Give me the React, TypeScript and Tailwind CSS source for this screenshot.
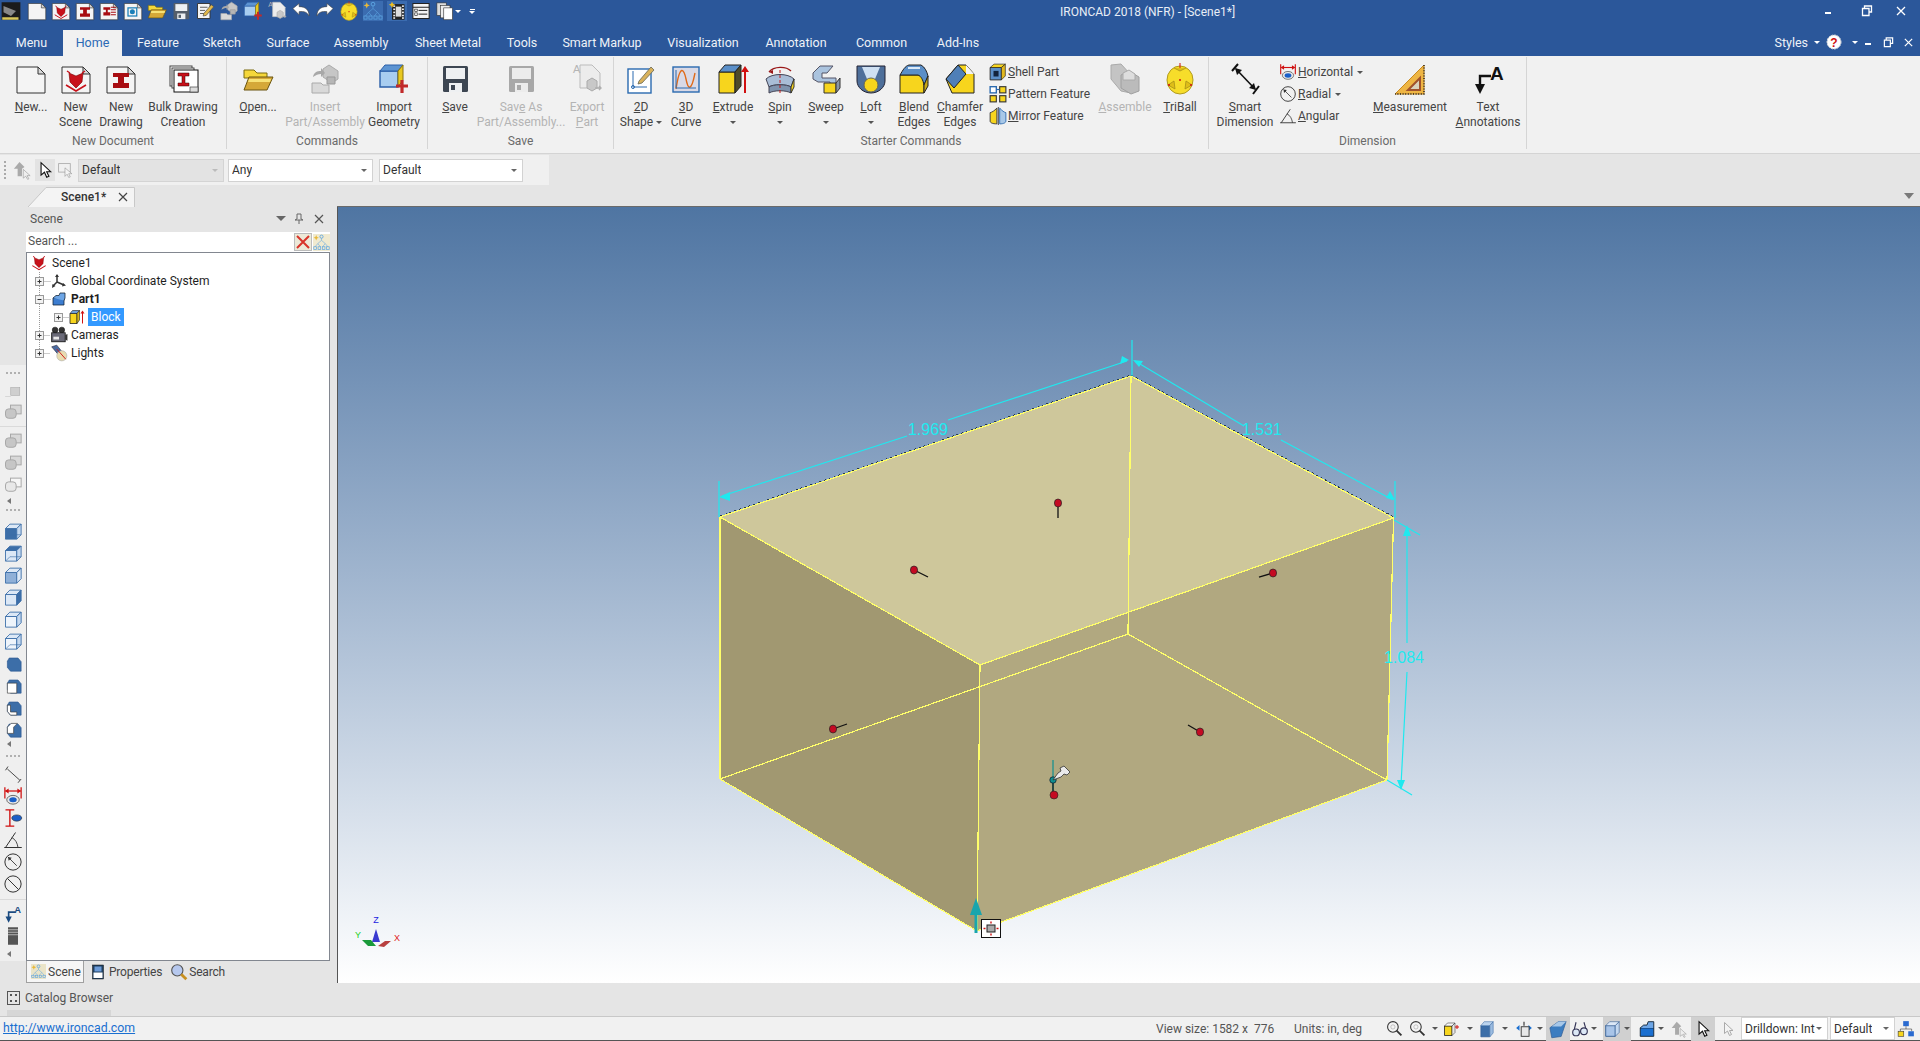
import React from "react";

type P = { s?: number; children?: React.ReactNode };
const I = ({ s = 32, children }: P) => (
  <svg width={s} height={s} viewBox="0 0 32 32" className="block shrink-0">
    {children}
  </svg>
);

const U = ({ c }: { c: string }) => <span className="underline">{c}</span>;
const Arrow = ({ color = "border-t-[#555]" }: { color?: string }) => (
  <span className={`inline-block w-0 h-0 border-x-[3px] border-t-[3px] border-x-transparent ${color}`} />
);

const Paper = ({ s = 32, children }: P) => (
  <I s={s}>
    <path d="M2 4h21l7 7v19H2z" fill="#f4f4f4" stroke="#333" strokeWidth="1" />
    <path d="M23 4v7h7z" fill="#d8d8d8" stroke="#333" strokeWidth="1" />
    {children}
  </I>
);
const Red3D = () => (
  <g>
    <path d="M9 10l7 3 7-3-1 9-6 6-6-6z" fill="#c8111a" stroke="#700" strokeWidth=".6" />
    <path d="M6 22l10 6 10-6" fill="none" stroke="#c8111a" strokeWidth="1.6" />
    <path d="M7 8l3 2M25 8l-3 2" stroke="#c8111a" strokeWidth="1.4" />
  </g>
);
const Beam = () => <path d="M8 10h16v4h-5v6h5v5H8v-5h5v-6H8z" fill="#a80d12" />;
const NewDoc = ({ s }: P) => <Paper s={s} />;
const NewScene = ({ s }: P) => <Paper s={s}><Red3D /></Paper>;
const NewDrawing = ({ s }: P) => <Paper s={s}><Beam /></Paper>;
const Bulk = ({ s }: P) => (
  <I s={s}>
    <rect x="3" y="3" width="22" height="20" fill="#fff" stroke="#444" />
    <rect x="5" y="5" width="22" height="20" fill="#fff" stroke="#444" />
    <rect x="7" y="7" width="24" height="22" fill="#fff" stroke="#111" />
    <path d="M11 10h11v3h-4v7h4v3H11v-3h4v-7h-4z" fill="#c8111a" stroke="#300" strokeWidth=".5" />
    <rect x="23" y="24" width="8" height="5" fill="#ddd" stroke="#444" strokeWidth=".7" />
  </I>
);
const Folder = ({ s }: P) => (
  <I s={s}>
    <path d="M2 7h10l3 3h10v5H2z" fill="#f5d73a" stroke="#7a6a10" />
    <path d="M2 27l5-13h24l-6 13z" fill="#d5a838" stroke="#6a5510" />
    <path d="M7 16h22l-1 3H6z" fill="#f7e276" />
  </I>
);
const Insert = ({ s }: P) => (
  <I s={s}>
    <path d="M14 6l6-4 9 6v8l-6 4-9-6z" fill="#c6c6c6" stroke="#aaa" />
    <path d="M18 14h8v7h-8z" fill="#b6b6b6" stroke="#999" />
    <path d="M3 20h9l2 2h6v8H3z" fill="#d9d9d9" stroke="#aaa" />
    <path d="M4 14c1-5 4-6 8-6V5l4 5-4 4v-3c-3 0-5 1-8 3z" fill="#a8a8a8" />
  </I>
);
const Import = ({ s }: P) => (
  <I s={s}>
    <path d="M2 8h18v16H2z" fill="#a8cdf0" stroke="#2a5ea8" strokeWidth="1.4" />
    <path d="M2 8l5-6h18l-5 6z" fill="#5d94d2" stroke="#2a5ea8" />
    <path d="M20 8l5-6v15l-5 7z" fill="#e8c820" stroke="#8a7410" />
    <path d="M18 23h12M24 17v13" stroke="#c12a2a" strokeWidth="3.2" />
  </I>
);
const Floppy = ({ s, c = "#3d4652", l = "#eef0f2" }: P & { c?: string; l?: string }) => (
  <I s={s}>
    <rect x="4" y="3" width="25" height="26" rx="1.5" fill={c} />
    <rect x="7" y="5" width="19" height="11" fill={l} />
    <rect x="10" y="20" width="13" height="9" fill={l} />
    <rect x="12" y="22" width="4" height="5" fill={c} />
  </I>
);
const ExportP = ({ s }: P) => (
  <I s={s}>
    <path d="M9 2h12l8 8v15H9z" fill="#ececec" stroke="#bbb" />
    <path d="M16 18l5-3 5 3v7l-5 3-5-3z" fill="#c8c8c8" stroke="#aaa" />
    <path d="M24 25h6M28 23l2 2-2 2" stroke="#b0b0b0" strokeWidth="1.4" fill="none" />
    <text x="2" y="10" fontSize="11" fill="#b5b5b5" fontFamily="Liberation Sans">A</text>
  </I>
);
const Shape2D = ({ s }: P) => (
  <I s={s}>
    <rect x="3" y="6" width="23" height="24" fill="#fff" stroke="#2a6ab0" strokeWidth="1.4" />
    <path d="M8 8v16h14" fill="none" stroke="#2a6ab0" />
    <circle cx="8" cy="24" r="1.5" fill="none" stroke="#2a6ab0" />
    <path d="M14 18L26 4l3 3-12 13-4 1z" fill="#d9b25c" stroke="#665" strokeWidth=".8" />
  </I>
);
const Curve3D = ({ s }: P) => (
  <I s={s}>
    <rect x="3" y="4" width="26" height="25" fill="#d9d9e6" stroke="#2a6ab0" strokeWidth="1.4" />
    <path d="M6 26C10 0 14 6 16 16s5 14 9-6" fill="none" stroke="#e06a1a" strokeWidth="1.4" />
    <path d="M6 7v18h20" fill="none" stroke="#2a6ab0" />
  </I>
);
const Extrude = ({ s }: P) => (
  <I s={s}>
    <path d="M2 9h16v21H2z" fill="#f7d51d" stroke="#222" />
    <path d="M2 9l6-7h16l-6 7z" fill="#5b8fc8" stroke="#222" />
    <path d="M18 9l6-7v21l-6 7z" fill="#4e4a2a" stroke="#222" />
    <path d="M28 30V8" stroke="#d01010" strokeWidth="2" />
    <path d="M24 9l4-6 4 6z" fill="#d01010" />
  </I>
);
const Spin = ({ s }: P) => (
  <I s={s}>
    <path d="M5 9C10 3 22 3 27 8" fill="none" stroke="#9a1818" strokeWidth="1.4" />
    <path d="M5 9l4-2v4z" fill="#9a1818" />
    <path d="M2 16c6-6 22-6 28 0l-3 8c-4-3-18-3-22 0z" fill="#a9bdd6" stroke="#445" />
    <path d="M5 24c4-3 18-3 22 0v6c-5-3-17-3-22 0z" fill="#7f93ad" stroke="#445" />
    <path d="M27 24l3-8v8l-3 6z" fill="#f7d51d" stroke="#333" />
    <path d="M16 7v24" stroke="#c01818" strokeDasharray="3 2" />
  </I>
);
const Sweep = ({ s }: P) => (
  <I s={s}>
    <path d="M3 10l7-7h13l-6 7h-5v5h14v10h-6v-6H8l-5-3z" fill="#aac3de" stroke="#556" />
    <path d="M14 20h12v10H14z" fill="#f7d51d" stroke="#333" />
    <path d="M26 20l4-5v10l-4 5z" fill="#8a96a6" stroke="#333" />
  </I>
);
const Loft = ({ s }: P) => (
  <I s={s}>
    <path d="M2 3h28v15c0 6-6 12-14 12S2 24 2 18z" fill="#4e6f9a" stroke="#223" />
    <path d="M7 4h18l-5 12H12z" fill="#cfe0f2" />
    <circle cx="16" cy="22" r="7" fill="#f7d51d" stroke="#665" />
  </I>
);
const Blend = ({ s }: P) => (
  <I s={s}>
    <path d="M2 12h24v18H2z" fill="#f7d51d" stroke="#222" />
    <path d="M2 12c3-5 5-9 9-10h12c4 2 6 7 7 11l-4 9c-1-5-3-9-6-10z" fill="#5b8fc8" stroke="#222" />
    <path d="M26 22l4-9v10l-4 7z" fill="#c8a818" stroke="#222" />
    <path d="M10 5h12" stroke="#dbe9f7" strokeWidth="2" />
  </I>
);
const Chamfer = ({ s }: P) => (
  <I s={s}>
    <path d="M2 16L14 2h8l8 9v19H8z" fill="#f7d51d" stroke="#222" />
    <path d="M2 16L14 2l8 9-12 14z" fill="#4f7fb8" stroke="#222" />
    <path d="M22 2l8 9H22z" fill="#f3f3f3" />
  </I>
);
const Shell = ({ s = 18 }: P) => (
  <I s={s}>
    <path d="M2 8h20v22H2z" fill="#5b8fc8" stroke="#222" strokeWidth="1.6" />
    <path d="M8 14h9v10H8z" fill="#12233c" />
    <path d="M2 8l7-6h20l-7 6z" fill="#f7d51d" stroke="#222" strokeWidth="1.2" />
    <path d="M22 8l7-6v21l-7 7z" fill="#e2b81e" stroke="#222" strokeWidth="1.2" />
  </I>
);
const Pattern = ({ s = 18 }: P) => (
  <I s={s}>
    <rect x="2" y="3" width="11" height="11" fill="#fff" stroke="#2a6ab0" strokeWidth="2.4" />
    <rect x="19" y="3" width="11" height="11" fill="#f7d51d" stroke="#333" strokeWidth="2" />
    <rect x="2" y="19" width="11" height="11" fill="#f7d51d" stroke="#333" strokeWidth="2" />
    <rect x="19" y="19" width="11" height="11" fill="#f7d51d" stroke="#333" strokeWidth="2" />
    <path d="M13 8h6" stroke="#2a6ab0" strokeWidth="2" />
  </I>
);
const Mirror = ({ s = 18 }: P) => (
  <I s={s}>
    <path d="M14 2v28c-8 0-12-2-12-5V10c4-1 7-3 12-8z" fill="#f7d51d" stroke="#333" strokeWidth="1.6" />
    <path d="M19 2c5 5 7 7 11 8v15c0 3-4 5-11 5z" fill="#a8c8e8" stroke="#2a6ab0" strokeWidth="1.6" />
    <path d="M16.5 0v32" stroke="#223" strokeWidth="1.5" />
  </I>
);
const Assemble = ({ s }: P) => (
  <I s={s}>
    <path d="M2 2l10-1 10 11v18L12 28 2 16z" fill="#c4c4c4" stroke="#aaa" />
    <path d="M12 12l8-4 10 6v14l-8 3-10-6z" fill="#bbb" stroke="#a0a0a0" />
    <path d="M14 10l6-3 6 4v6h-12z" fill="#ddd" stroke="#aaa" />
  </I>
);
const TriBall = ({ s }: P) => (
  <I s={s}>
    <ellipse cx="16" cy="17" rx="13" ry="14" fill="#f7dd2a" stroke="#b09a20" />
    <path d="M4 22l6-4 1 8zM28 22l-6-4-1 8zM10 5l6 3 6-3" fill="#dfbe18" stroke="#a89018" strokeWidth=".8" />
    <path d="M16 0v5" stroke="#d01010" />
    <circle cx="16" cy="17" r="1" fill="#d01010" />
    <circle cx="5" cy="22" r="1" fill="#d01010" />
    <circle cx="27" cy="22" r="1" fill="#d01010" />
  </I>
);
const SmartDim = ({ s }: P) => (
  <I s={s}>
    <path d="M3 8L9 1M24 31l6-8" stroke="#111" strokeWidth="2" />
    <path d="M7 6l19 20" stroke="#111" strokeWidth="1.6" />
    <path d="M6 5l7 2-5 5zM27 27l-7-2 5-5z" fill="#111" />
  </I>
);
const Horizontal = ({ s = 18 }: P) => (
  <I s={s}>
    <path d="M3 2v18M29 2v18" stroke="#d01010" strokeWidth="2" />
    <path d="M4 8h24" stroke="#d01010" strokeWidth="2" />
    <path d="M3 8l6-4v8zM29 8l-6-4v8z" fill="#d01010" />
    <ellipse cx="16" cy="22" rx="10" ry="7" fill="#e8e8e8" stroke="#222" />
    <ellipse cx="16" cy="22" rx="6" ry="4" fill="#1a5fc8" />
  </I>
);
const Radial = ({ s = 18 }: P) => (
  <I s={s}>
    <circle cx="16" cy="16" r="13" fill="none" stroke="#333" strokeWidth="1.6" />
    <path d="M8 8l14 14" stroke="#333" strokeWidth="1.4" />
    <path d="M8 8l6 1-5 5z" fill="#333" />
  </I>
);
const Angular = ({ s = 18 }: P) => (
  <I s={s}>
    <path d="M2 28h28M4 28L20 4" stroke="#333" strokeWidth="1.6" fill="none" />
    <path d="M14 12c6 3 9 9 10 16" stroke="#333" strokeWidth="1.4" fill="none" />
  </I>
);
const Measure = ({ s }: P) => (
  <I s={s}>
    <path d="M30 2v29H1z" fill="#eeb544" stroke="#c88a20" />
    <path d="M26 15v12H14z" fill="#d9d2bc" stroke="#a0522d" strokeWidth="2" />
    <path d="M30 2v29H1" fill="none" stroke="#222" strokeWidth="1.4" strokeDasharray="1 1.6" />
  </I>
);
const TextAnn = ({ s }: P) => (
  <I s={s}>
    <path d="M19 13H8v11" fill="none" stroke="#111" strokeWidth="2.4" />
    <path d="M3 21h10l-5 10z" fill="#111" />
    <text x="18" y="17" fontSize="19" fontWeight="700" fill="#111" fontFamily="Liberation Sans">A</text>
  </I>
);

const Logo = () => (
  <I s={20}>
    <rect x="1" y="2" width="30" height="28" fill="#1b1b1b" />
    <path d="M4 8l20 8-8 8-12-6z" fill="#888" />
    <path d="M2 26h26v4H2z" fill="#d8c65a" />
  </I>
);
const Note = ({ s }: P) => (
  <I s={s}>
    <path d="M4 4h20v24H4z" fill="#f4f4f4" stroke="#333" strokeWidth="1.5" />
    <path d="M8 10h12M8 15h8M8 20h8" stroke="#555" strokeWidth="1.5" />
    <path d="M14 20L26 6l4 3-12 14-5 1z" fill="#e2b84a" stroke="#444" />
  </I>
);
const Undo = ({ s, flip }: P & { flip?: boolean }) => (
  <I s={s}>
    <g transform={flip ? "translate(32 0) scale(-1 1)" : undefined}>
      <path d="M3 12l10-8v5c10 0 16 5 16 15-3-6-8-8-16-7v5z" fill="#fff" stroke="#444" strokeWidth="1" />
    </g>
  </I>
);
const TreeIc = ({ s = 20 }: P) => (
  <I s={s}>
    <circle cx="16" cy="5" r="3" fill="none" stroke="#5ba3e0" strokeWidth="1.6" />
    <path d="M16 8v4M16 12l-7 6M16 12l7 6M9 18l-5 6M9 18l5 6M23 18l-5 6M23 18l5 6" stroke="#5ba3e0" />
    {[4, 12, 20, 28].map((x) => <rect key={x} x={x - 2.5} y="24" width="5" height="5" fill="none" stroke="#5ba3e0" strokeWidth="1.3" />)}
    <path d="M6 2l1.5 3.5L11 7 7.5 8.5 6 12 4.5 8.5 1 7l3.5-1.5z" fill="#e8b838" />
  </I>
);
const Film = ({ s }: P) => (
  <I s={s}>
    <rect x="8" y="5" width="20" height="25" fill="#222" />
    {[7, 12, 17, 22, 26].map((y) => <g key={y}><rect x="10" y={y} width="3" height="2.5" fill="#eee" /><rect x="24" y={y} width="3" height="2.5" fill="#eee" /></g>)}
    <rect x="14" y="9" width="9" height="16" fill="#ddd" />
    <path d="M8 1l1.6 3.4L13 6 9.6 7.6 8 11 6.4 7.6 3 6l3.4-1.6z" fill="#f0c020" />
  </I>
);
const ListIc = ({ s }: P) => (
  <I s={s}>
    <rect x="3" y="4" width="26" height="24" fill="#f4f4f4" stroke="#222" strokeWidth="1.6" />
    <path d="M3 10h26M12 15h14M12 21h14" stroke="#222" strokeWidth="1.6" />
    <rect x="6" y="13" width="4" height="4" fill="none" stroke="#222" />
    <rect x="6" y="19" width="4" height="4" fill="none" stroke="#222" />
  </I>
);
const Copies = ({ s }: P) => (
  <I s={s}>
    <rect x="3" y="3" width="15" height="20" fill="#ddd" stroke="#333" />
    <rect x="9" y="7" width="15" height="20" fill="#eee" stroke="#333" />
    <rect x="14" y="11" width="14" height="19" fill="#fff" stroke="#333" />
  </I>
);
const BlueDoc = ({ s }: P) => (
  <Paper s={s}>
    <rect x="8" y="11" width="14" height="13" fill="none" stroke="#1a7fb8" strokeWidth="2" />
    <circle cx="15" cy="17" r="4" fill="#1a7fb8" />
  </Paper>
);
const ListRed = ({ s }: P) => (
  <Paper s={s}>
    <path d="M7 10h11v4h-4v4h4v5H7v-5h4v-4H7z" fill="#a80d12" />
    <path d="M19 10h8M19 14h8M19 18h8M19 22h8" stroke="#a80d12" strokeWidth="1.6" />
  </Paper>
);

const CursorIc = ({ s = 20, c = "#fff", st = "#111" }: P & { c?: string; st?: string }) => (
  <I s={s}>
    <path d="M9 3v22l6-5 4 9 4-2-4-8h7z" fill={c} stroke={st} strokeWidth="2" />
  </I>
);
const GrayHandCur = ({ s = 20 }: P) => (
  <I s={s}>
    <path d="M3 14L12 3l8 8-4 3v12H9V14z" fill="#aaa" />
    <path d="M18 15v14l4-3 3 5 2-1-3-5h5z" fill="#eee" stroke="#999" />
  </I>
);
const SelBox = ({ s = 20 }: P) => (
  <I s={s}>
    <rect x="3" y="3" width="22" height="16" fill="none" stroke="#aaa" strokeWidth="1.6" />
    <path d="M15 11v16l4-4 3 6 3-1-3-6h6z" fill="#f4f4f4" stroke="#888" />
  </I>
);

const Btn = ({ w, icon, l1, l2, dis, arrow, h = "h-[32px]" }: { w: string; icon: React.ReactNode; l1?: React.ReactNode; l2?: React.ReactNode; dis?: boolean; arrow?: boolean; h?: string }) => (
  <div className={`${w} flex flex-col items-center shrink-0 leading-[15px] whitespace-nowrap ${dis ? "text-[#b4b4b4]" : "text-[#444]"}`}>
    <div className={`${h} flex items-center justify-center`}>{icon}</div>
    <div className="mt-[5px] h-[15px] text-center">{l1}</div>
    <div className="h-[15px] text-center flex items-center justify-center">{l2}{arrow && <span className="ml-[3px] flex"><Arrow /></span>}</div>
  </div>
);

const Group = ({ w, pl, label, children, noBorder }: { w: string; pl: string; label: string; children: React.ReactNode; noBorder?: boolean }) => (
  <div className={`${w} shrink-0 h-[92px] mt-[1px] flex flex-col ${noBorder ? "" : "border-r border-[#d5d5d5]"}`}>
    <div className={`flex ${pl} pt-[6px] h-[78px]`}>{children}</div>
    <div className="text-center text-[#6a6a6a] leading-[15px]">{label}</div>
  </div>
);

const SmallRow = ({ icon, children, dis }: { icon: React.ReactNode; children: React.ReactNode; dis?: boolean }) => (
  <div className={`flex items-center h-[22px] ${dis ? "text-[#b4b4b4]" : "text-[#444]"}`}>
    {icon}
    <div className="ml-[1px] flex items-center whitespace-nowrap">{children}</div>
  </div>
);

const Drop = ({ w, text, dis }: { w: string; text: string; dis?: boolean }) => (
  <div className={`${w} h-[23px] shrink-0 flex items-center justify-between px-[3px] border ${dis ? "bg-[#e3e3e3] border-[#d4d4d4]" : "bg-white border-[#d2d2d2]"} text-[#333]`}>
    <span className="truncate">{text}</span>
    <span className="flex mr-[2px]"><Arrow color={dis ? "border-t-[#bbb]" : "border-t-[#666]"} /></span>
  </div>
);

const Grip = () => (
  <div className="h-[3px] flex gap-[2px] justify-center items-center">
    {[0, 1, 2, 3].map((i) => <span key={i} className="w-[2px] h-[2px] bg-[#b0b0b0]" />)}
  </div>
);
const LeftArrow = () => (
  <span className="block w-0 h-0 border-y-[3px] border-r-[4px] border-y-transparent border-r-[#777] ml-[7px]" />
);

const Sq = ({ s = 20, stroke = "#a8a8a8", fill = "#c6c6c6", top = "#d8d8d8" }: P & { stroke?: string; fill?: string; top?: string }) => (
  <I s={s}>
    <rect x="12" y="5" width="17" height="14" fill={top} stroke={stroke} strokeWidth="1.6" />
    <rect x="4" y="11" width="17" height="15" rx="5" fill={fill} stroke={stroke} strokeWidth="1.6" />
  </I>
);
const VCube = ({ f = "none", t = "none", r = "none", i = "none", solid }: { f?: string; t?: string; r?: string; i?: string; solid?: boolean }) => (
  <I s={20}>
    {i !== "none" && <path d="M12 6h17v16H12z" fill={i} />}
    <path d="M4 12h18v17H4z" fill={f === "none" ? "#dce8f6" : f} stroke="#3c6ea8" strokeWidth="1.4" />
    <path d="M4 12l7-7h18l-7 7z" fill={t === "none" ? "#dce8f6" : t} stroke="#3c6ea8" strokeWidth="1.4" />
    <path d="M22 12l7-7v17l-7 7z" fill={r === "none" ? "#c4d8ef" : r} stroke="#3c6ea8" strokeWidth="1.4" />
    {solid && <path d="M4 29l7-7h18" fill="none" stroke="#3c6ea8" />}
  </I>
);
const SCube = ({ w }: { w?: "tl" | "bl" | "l" | "t" }) => (
  <I s={20}>
    <path d="M10 8l14 0 5 6v15H12l-5-6V13z" fill="#3c6ea8" stroke="#2a5690" />
    {w === "l" && <path d="M7 13h15v16H7z" fill="#fff" stroke="#333" />}
    {w === "tl" && <path d="M7 13l6-6h10l-6 6v10H7z" fill="#fff" stroke="#333" />}
    {w === "bl" && <path d="M7 23l5 6h10v-5H12V13H7z" fill="#fff" stroke="#333" />}
  </I>
);
const Ln = ({ children }: { children: React.ReactNode }) => <div className="h-[22px] flex items-center justify-center">{children}</div>;

const Strip = () => (
  <div className="w-[26px] h-[596px] mt-[158px] bg-[#efefef] flex flex-col items-stretch">
    <div className="h-[8px] flex items-center justify-center mt-[4px]"><Grip /></div>
    <div className="h-[6px]" />
    <div className="h-[18px] flex items-center justify-center">
      <I s={18}><path d="M2 24h10" stroke="#c4c4c4" /><rect x="12" y="8" width="16" height="14" fill="#cfcfcf" stroke="#a8a8a8" /></I>
    </div>
    <Ln><Sq /></Ln>
    <div className="h-[7px] flex items-center"><div className="w-full h-px bg-[#dadada]" /></div>
    <Ln><Sq /></Ln><Ln><Sq /></Ln><Ln><Sq top="#f6f6f6" fill="#e8e8e8" /></Ln>
    <div className="h-[10px] flex items-center"><LeftArrow /></div>
    <div className="h-[8px] flex items-center justify-center"><Grip /></div>
    <div className="h-[6px]" />
    <Ln><VCube f="#3c6ea8" solid /></Ln>
    <Ln><VCube t="#3c6ea8" solid /></Ln>
    <Ln><VCube r="#dce8f6" f="#8fb0d8" i="#3c6ea8" /></Ln>
    <Ln><VCube r="#3c6ea8" /></Ln>
    <Ln><VCube i="#3c6ea8" f="#eef4fb" /></Ln>
    <Ln><VCube i="#dce8f6" t="#dce8f6" f="#eef4fb" solid /></Ln>
    <Ln><SCube /></Ln><Ln><SCube w="l" /></Ln><Ln><SCube w="bl" /></Ln><Ln><SCube w="tl" /></Ln>
    <div className="h-[8px] flex items-center"><LeftArrow /></div>
    <div className="h-[15px] flex items-center justify-center"><Grip /></div>
    <Ln><I s={20}><path d="M4 10l4-6M24 30l5-6M7 8l20 18" stroke="#333" strokeWidth="1.4" /></I></Ln>
    <Ln><Horizontal s={20} /></Ln>
    <Ln><I s={20}><path d="M4 3h14M4 29h14M11 3v26" stroke="#d01010" strokeWidth="2.2" /><ellipse cx="22" cy="16" rx="8" ry="5" fill="#1a5fc8" stroke="#333" /></I></Ln>
    <Ln><Angular s={20} /></Ln>
    <Ln><Radial s={20} /></Ln>
    <Ln><I s={20}><circle cx="16" cy="16" r="13" fill="none" stroke="#333" strokeWidth="1.6" /><path d="M7 7l18 18" stroke="#333" strokeWidth="1.6" /></I></Ln>
    <div className="h-[8px] flex items-center"><div className="w-full h-px bg-[#dadada]" /></div>
    <Ln><I s={20}><path d="M20 13H9v10" fill="none" stroke="#1a4a80" strokeWidth="2.6" /><path d="M4 20h10l-5 10z" fill="#1a4a80" /><text x="18" y="15" fontSize="15" fontWeight="700" fill="#1a4a80" fontFamily="Liberation Sans">A</text></I></Ln>
    <Ln><I s={20}><rect x="8" y="2" width="16" height="28" fill="#555" /><path d="M8 6h16M8 10h16M8 14h16" stroke="#eee" /></I></Ln>
    <div className="h-[14px] flex items-center"><LeftArrow /></div>
  </div>
);

const Gutter = ({ w, v = "full", box, boxX = 12 }: { w: number; v?: "full" | "half" | "none"; box?: "+" | "-"; boxX?: number }) => (
  <svg width={w} height={18} className="block shrink-0">
    {v !== "none" && <path d={`M12.5 0V${v === "full" ? 18 : 9}`} stroke="#999" strokeDasharray="1 1" />}
    <path d={`M${boxX}.5 9.5H${w}`} stroke="#999" strokeDasharray="1 1" />
    <rect x={boxX - 4 + 0.5} y={5.5} width={8} height={8} fill="#f2f2f2" stroke="#999" />
    <path d={`M${boxX - 2 + 0.5} 9.5h4`} stroke="#333" />
    {box === "+" && <path d={`M${boxX}.5 7.5v4`} stroke="#333" />}
  </svg>
);

const Axes = () => (
  <I s={16}>
    <path d="M12 4v14L4 26M12 18l14 6" fill="none" stroke="#333" strokeWidth="3" />
    <path d="M8 8l4-6 4 6zM24 20l6 5-8 2zM2 30l1-8 6 4z" fill="#333" />
  </I>
);
const Part3D = () => (
  <I s={16}>
    <path d="M4 14h22v14H4z" fill="#3c7dd0" stroke="#123" strokeWidth="1.5" />
    <path d="M4 14l6-5h6l2-5h10v10l-2 5" fill="#6ea6e6" stroke="#123" strokeWidth="1.5" />
  </I>
);
const Block = () => (
  <I s={16}>
    <path d="M2 9h14v20H2z" fill="#f7d51d" stroke="#222" strokeWidth="1.6" />
    <path d="M2 9l5-6h14l-5 6z" fill="#6fa0d8" stroke="#222" strokeWidth="1.2" />
    <path d="M16 9l5-6v19l-5 7z" fill="#d8b81a" stroke="#222" strokeWidth="1.2" />
    <path d="M27 29V8" stroke="#d01010" strokeWidth="2" />
    <path d="M23 9l4-6 4 6z" fill="#d01010" />
  </I>
);
const Cam = () => (
  <I s={18}>
    <circle cx="9" cy="7" r="5" fill="#333" stroke="#111" />
    <circle cx="21" cy="7" r="5" fill="#333" stroke="#111" />
    <rect x="3" y="12" width="24" height="16" fill="#6a6a78" stroke="#111" strokeWidth="1.5" />
    <rect x="6" y="19" width="10" height="5" fill="#e8e8e8" />
    <path d="M27 16l4-2v12l-4-2z" fill="#333" />
  </I>
);
const LightIc = () => (
  <I s={18}>
    <path d="M3 5l9-3 8 10-6 6z" fill="#4a6aa0" stroke="#223" />
    <circle cx="21" cy="21" r="9" fill="#e8dcb0" stroke="#aaa" />
    <path d="M12 9l16 18" stroke="#d01010" strokeWidth="1.6" />
  </I>
);

const Row = ({ children }: { children: React.ReactNode }) => <div className="h-[18px] flex items-center whitespace-nowrap text-[#1e1e1e]">{children}</div>;

const Tree = () => (
  <div className="flex-1 bg-white border border-[#828790] pt-[1px] text-[12px]">
    <Row>
      <div className="w-[4px]" />
      <svg width="16" height="16" viewBox="5 6 22 24" className="block shrink-0"><Red3D /></svg>
      <span className="ml-[5px]">Scene1</span>
    </Row>
    <Row><Gutter w={24} box="+" /><Axes /><span className="ml-[4px]">Global Coordinate System</span></Row>
    <Row><Gutter w={24} box="-" /><Part3D /><span className="ml-[4px] font-bold">Part1</span></Row>
    <Row><Gutter w={42} box="+" boxX={31} /><Block /><span className="ml-[3px] bg-[#3399ff] text-white h-[18px] leading-[18px] px-[3px]">Block</span></Row>
    <Row><Gutter w={23} box="+" /><Cam /><span className="ml-[3px]">Cameras</span></Row>
    <Row><Gutter w={23} v="half" box="+" /><LightIc /><span className="ml-[3px]">Lights</span></Row>
  </div>
);

const Pin = ({ x, y, ex, ey }: { x: number; y: number; ex: number; ey: number }) => (
  <g>
    <line x1={x} y1={y} x2={ex} y2={ey} stroke="#111" strokeWidth="1.3" />
    <ellipse cx={x} cy={y} rx="3.6" ry="4" fill="#c40a22" stroke="#222" strokeWidth=".7" />
  </g>
);

const Viewport = () => {
  const cy = "#1fe9ef";
  const yl = "#ffff6a";
  return (
    <div className="w-[1582px] h-[776px] bg-gradient-to-b from-[#4f75a2] to-[#ffffff]">
      <svg viewBox="338 207 1582 776" className="block w-full h-full">
        <g shapeRendering="crispEdges">
          <polygon points="720,517 1131,376 1393.5,518 980,665" fill="#cec79b" />
          <polygon points="720,517 980,665 977,931 720,779" fill="#a19871" />
          <polygon points="980,665 1393.5,518 1387,780 977,931" fill="#b1a880" />
          <path d="M720 516L1131 375L1394 517" fill="none" stroke="#2a3a4a" strokeWidth="1" strokeDasharray="2 3" />
          <g stroke={yl} strokeWidth="1.2" fill="none">
            <path d="M720 517L1131 376L1393.5 518L980 665Z" />
            <path d="M720 517L980 665" />
            <path d="M720 517V779L977 931L1387 780L1393.5 518" />
            <path d="M980 665L977 931" />
            <path d="M1128 634L1131 376M1128 634L720 779M1128 634L1387 780" />
          </g>
        </g>
        <g stroke={cy} strokeWidth="1.2" fill="none">
          <path d="M722 496L907 436M948 420L1127 361" />
          <path d="M1135 361L1244 426M1281 440L1393 500" />
          <path d="M719 481V517M1395 481V518M1132 340V376" />
          <path d="M1407 530V643M1407 672L1401 785" />
          <path d="M1394 520L1420 535M1387 780L1412 795" />
        </g>
        <g fill={cy}>
          <polygon points="719,497 730,492 730,501" />
          <polygon points="1129,360 1120,364 1122,356" />
          <polygon points="1133,360 1139,367 1143,361" />
          <polygon points="1395,500 1386,498 1390,491" />
          <polygon points="1407,525 1403,536 1411,536" />
          <polygon points="1401,790 1397,780 1405,780" />
        </g>
        <g fill={cy} fontFamily="Liberation Sans" fontSize="16">
          <text x="928" y="435" textAnchor="middle">1.969</text>
          <text x="1262" y="435" textAnchor="middle">1.531</text>
          <text x="1404" y="663" textAnchor="middle">1.084</text>
        </g>
        <Pin x={1058} y={503} ex={1058} ey={518} />
        <Pin x={914} y={570} ex={928} ey={577} />
        <Pin x={1273} y={573} ex={1259} ey={577} />
        <Pin x={833} y={729} ex={847} ey={724} />
        <Pin x={1200} y={732} ex={1188} ey={725} />
        <line x1="1053" y1="760" x2="1053" y2="795" stroke="#0f8f90" strokeWidth="1.2" />
        <line x1="1053" y1="780" x2="1053" y2="795" stroke="#111" strokeWidth="1.2" />
        <circle cx="1054" cy="795" r="4" fill="#c40a22" stroke="#222" strokeWidth=".6" />
        <circle cx="1053" cy="780" r="3.2" fill="#0f8f90" stroke="#123" strokeWidth=".8" />
        <path d="M1053 780l5-7 3-2-1-3 4-2 6 6-3 3-3-1-3 3z" fill="#eaeaea" stroke="#333" strokeWidth=".8" />
        <line x1="976" y1="933" x2="976" y2="910" stroke="#19a5ad" strokeWidth="3" />
        <polygon points="976,898 970,915 982,915" fill="#19a5ad" />
        <rect x="981.5" y="919.5" width="19" height="18" fill="#fff" stroke="#111" />
        <rect x="987" y="925" width="8" height="7" fill="#aaa" stroke="#222" />
        <path d="M991 921.5v2M991 933.5v2M983.5 928.5h2M996.5 928.5h2" stroke="#d01010" strokeWidth="1.4" />
        <g fontFamily="Liberation Sans" fontSize="9">
          <text x="376" y="923" fill="#2222e0" textAnchor="middle">Z</text>
          <text x="397" y="941" fill="#e02020" textAnchor="middle">X</text>
          <text x="358" y="938" fill="#22d022" textAnchor="middle">Y</text>
        </g>
        <polygon points="376,929 372,942 380,942" fill="#3a3ad0" />
        <polygon points="362,940 371,940 376,946 368,946" fill="#1a9a3a" />
        <polygon points="378,946 385,941 391,941 384,947" fill="#b84040" />
      </svg>
    </div>
  );
};

const Cell = ({ w, children, hi }: { w: string; children?: React.ReactNode; hi?: boolean }) => (
  <div className={`${w} h-[24px] shrink-0 flex items-center justify-center ${hi ? "bg-[#d0d0d0]" : ""}`}>{children}</div>
);
const Zoomer = ({ plus }: { plus?: boolean }) => (
  <I s={17}>
    <circle cx="13" cy="13" r="10" fill="#f4f4f4" stroke="#333" strokeWidth="2" />
    <path d="M20 20l9 9" stroke="#333" strokeWidth="3.4" />
    {plus ? <rect x="9" y="8" width="8" height="10" fill="none" stroke="#555" strokeWidth="1.4" /> : <circle cx="13" cy="13" r="4" fill="none" stroke="#999" />}
  </I>
);

const TABS: [string, string][] = [
  ["Feature", "w-[72px]"], ["Sketch", "w-[56px]"], ["Surface", "w-[76px]"], ["Assembly", "w-[70px]"], ["Sheet Metal", "w-[104px]"], ["Tools", "w-[44px]"], ["Smart Markup", "w-[116px]"], ["Visualization", "w-[86px]"], ["Annotation", "w-[100px]"], ["Common", "w-[71px]"], ["Add-Ins", "w-[82px]"],
];

export default function App() {
  return (
    <div className="w-[1920px] h-[1041px] overflow-hidden flex flex-col bg-[#e5e5e5] text-[12px] font-[Roboto,sans-serif]">
      {/* title bar */}
      <div className="h-[28px] bg-[#2b579a] flex items-center shrink-0">
        <div className="w-[1060px] flex items-center pl-[1px] -mt-[6px]">
          <div className="w-[20px] mr-[6px]"><Logo /></div>
          <div className="flex items-center gap-[4px]">
            <NewDoc s={20} /><NewScene s={20} /><NewDrawing s={20} /><ListRed s={20} /><BlueDoc s={20} /><Folder s={20} /><Floppy s={20} c="#555e6a" /><Note s={20} /><Insert s={20} /><Import s={20} /><ExportP s={20} /><Undo s={20} /><Undo s={20} flip /><TriBall s={20} />
            <div className="bg-[#3b6cb0]"><TreeIc /></div>
            <div className="bg-[#3b6cb0]"><Film s={20} /></div>
            <ListIc s={20} /><Copies s={20} />
          </div>
          <span className="flex"><Arrow color="border-t-white" /></span>
          <span className="ml-[8px] flex flex-col items-center gap-[1px]"><span className="w-[5px] h-px bg-white" /><Arrow color="border-t-white" /></span>
        </div>
        <div className="w-[174px] text-center text-[#e8eef6] whitespace-nowrap -mt-[4px]">IRONCAD 2018 (NFR) - [Scene1*]</div>
        <div className="flex-1 flex items-center justify-end text-white -mt-[6px]">
          <span className="w-[6px] h-[2px] bg-white mt-[4px]" />
          <svg width="12" height="12" viewBox="0 0 12 12" className="ml-[30px]"><path d="M3.5 3V1h7v6H8M1.5 3.5h6.5V10.500H1.500z" fill="none" stroke="#fff" strokeWidth="1.300" /></svg>
          <svg width="12" height="12" viewBox="0 0 12 12" className="ml-[22px] mr-[13px]"><path d="M2 2l8 8M10 2l-8 8" stroke="#fff" strokeWidth="1.300" /></svg>
        </div>
      </div>
      {/* tabs */}
      <div className="h-[28px] bg-[#2b579a] flex items-end shrink-0 text-white text-[12.5px]">
        <div className="w-[63px] h-[28px] pt-[2px] flex items-center justify-center text-[#eef2f8]">Menu</div>
        <div className="w-[59px] h-[26px] flex items-center justify-center bg-[#f1f1f1] text-[#2b6ab5]">Home</div>
        {TABS.map(([t, w]) => <div key={t} className={`${w} h-[28px] pt-[2px] flex items-center justify-center text-[#eef2f8]`}>{t}</div>)}
        <div className="flex-1 h-[28px] flex items-center justify-end">
          <span className="text-[#eef2f8] mr-[6px] pt-[2px]">Styles</span>
          <Arrow color="border-t-white" />
          <span className="mx-[5px]"><svg width="18" height="18" viewBox="0 0 18 18"><circle cx="9" cy="9" r="7" fill="#fff" stroke="#ddd" strokeDasharray="2 1" /><text x="9" y="13.500" textAnchor="middle" fontSize="12" fontWeight="700" fill="#d01010" fontFamily="Liberation Sans">?</text></svg></span>
          <span className="ml-[4px] flex"><Arrow color="border-t-white" /></span>
          <span className="w-[6px] h-[2px] bg-white ml-[7px] mt-[4px]" />
          <svg width="11" height="11" viewBox="0 0 12 12" className="ml-[12px]"><path d="M3.500 3V1h7v6H8M1.500 3.500h6.500V10.500H1.500z" fill="none" stroke="#fff" strokeWidth="1.300" /></svg>
          <svg width="11" height="11" viewBox="0 0 12 12" className="ml-[9px] mr-[6px]"><path d="M2 2l8 8M10 2l-8 8" stroke="#fff" strokeWidth="1.300" /></svg>
        </div>
      </div>
      {/* ribbon */}
      <div className="h-[98px] bg-[#f1f1f1] border-b border-[#d4d4d4] flex shrink-0">
        <Group w="w-[227px]" pl="pl-[8px]" label="New Document">
          <Btn w="w-[46px]" icon={<NewDoc />} l1={<><U c="N" />ew...</>} />
          <Btn w="w-[43px]" icon={<NewScene />} l1="New" l2="Scene" />
          <Btn w="w-[48px]" icon={<NewDrawing />} l1="New" l2="Drawing" />
          <Btn w="w-[76px]" icon={<Bulk />} l1="Bulk Drawing" l2="Creation" />
        </Group>
        <Group w="w-[201px]" pl="pl-[4px]" label="Commands">
          <Btn w="w-[54px]" icon={<Folder />} l1={<><U c="O" />pen...</>} />
          <Btn w="w-[80px]" dis icon={<Insert />} l1="Insert" l2="Part/Assembly" />
          <Btn w="w-[58px]" icon={<Import />} l1="Import" l2="Geometry" />
        </Group>
        <Group w="w-[186px]" pl="pl-[4px]" label="Save">
          <Btn w="w-[46px]" icon={<Floppy />} l1={<><U c="S" />ave</>} />
          <Btn w="w-[86px]" dis icon={<Floppy c="#a8a8a8" l="#ececec" />} l1={<>Sav<U c="e" /> As</>} l2="Part/Assembly..." />
          <Btn w="w-[46px]" dis icon={<ExportP />} l1="Export" l2={<><U c="P" />art</>} />
        </Group>
        <Group w="w-[595px]" pl="pl-[5px]" label="Starter Commands">
          <Btn w="w-[44px]" icon={<Shape2D />} l1={<><U c="2" />D</>} l2="Shape" arrow />
          <Btn w="w-[46px]" icon={<Curve3D />} l1={<><U c="3" />D</>} l2="Curve" />
          <Btn w="w-[48px]" icon={<Extrude />} l1={<><U c="E" />xtrude</>} l2={<Arrow />} />
          <Btn w="w-[46px]" icon={<Spin />} l1={<><U c="S" />pin</>} l2={<Arrow />} />
          <Btn w="w-[46px]" icon={<Sweep />} l1={<><U c="S" />weep</>} l2={<Arrow />} />
          <Btn w="w-[44px]" icon={<Loft />} l1={<><U c="L" />oft</>} l2={<Arrow />} />
          <Btn w="w-[42px]" icon={<Blend />} l1={<><U c="B" />lend</>} l2="Edges" />
          <Btn w="w-[50px]" icon={<Chamfer />} l1={<><U c="C" />hamfer</>} l2="Edges" />
          <div className="w-[110px] pl-[4px] -mt-[2px]">
            <SmallRow icon={<Shell />}><U c="S" />hell Part</SmallRow>
            <SmallRow icon={<Pattern />}>Pattern Feature</SmallRow>
            <SmallRow icon={<Mirror />}><U c="M" />irror Feature</SmallRow>
          </div>
          <Btn w="w-[60px]" dis icon={<Assemble />} l1={<><U c="A" />ssemble</>} />
          <Btn w="w-[50px]" icon={<TriBall />} l1={<><U c="T" />riBall</>} />
        </Group>
        <Group w="w-[318px]" pl="pl-[5px]" label="Dimension">
          <Btn w="w-[62px]" icon={<SmartDim />} l1={<><U c="S" />mart</>} l2="Dimension" />
          <div className="w-[94px] pl-[3px] -mt-[2px]">
            <SmallRow icon={<Horizontal />}><U c="H" />orizontal<span className="ml-[4px] flex"><Arrow /></span></SmallRow>
            <SmallRow icon={<Radial />}><U c="R" />adial<span className="ml-[4px] flex"><Arrow /></span></SmallRow>
            <SmallRow icon={<Angular />}><U c="A" />ngular</SmallRow>
          </div>
          <Btn w="w-[80px]" icon={<Measure />} l1={<><U c="M" />easurement</>} />
          <Btn w="w-[76px]" icon={<TextAnn />} l1="Text" l2={<><U c="A" />nnotations</>} />
        </Group>
      </div>
      {/* toolbar */}
      <div className="h-[32px] shrink-0 flex items-start pt-[1px]">
        <div className="w-[549px] h-[30px] bg-[#f0f0f0] flex items-center">
          <div className="ml-[4px] w-[2px] h-[18px] border-l-2 border-dotted border-[#aaa]" />
          <div className="ml-[5px] w-[22px] flex justify-center"><GrayHandCur /></div>
          <div className="ml-[2px] w-[20px] h-[22px] bg-[#e3e3e3] flex items-center justify-center"><CursorIc s={18} /></div>
          <div className="ml-[1px] w-[18px] flex justify-center"><SelBox s={17} /></div>
          <div className="ml-[4px]"><Drop w="w-[146px]" text="Default" dis /></div>
          <div className="ml-[4px]"><Drop w="w-[145px]" text="Any" /></div>
          <div className="ml-[6px]"><Drop w="w-[144px]" text="Default" /></div>
        </div>
      </div>
      {/* doc tabs */}
      <div className="h-[21px] shrink-0 flex">
        <div className="w-[337px] pl-[28px] flex items-end">
          <div className="relative w-[107px] h-[20px] flex items-center pl-[33px] pr-[4px] justify-between text-[#333] font-medium">
            <svg width="107" height="20" viewBox="0 0 107 20" className="absolute inset-0 block">
              <path d="M0 20L18 .5H106.500V20" fill="#f4f4f4" stroke="#c8c8c8" />
            </svg>
            <span className="relative">Scene1*</span>
            <svg width="10" height="10" viewBox="0 0 10 10" className="relative mr-[3px]"><path d="M1 1l8 8M9 1L1 9" stroke="#444" strokeWidth="1.200" /></svg>
          </div>
        </div>
        <div className="flex-1 border-b border-[#6a6a6a] flex justify-end items-center pr-[6px]">
          <span className="inline-block w-0 h-0 border-x-[5px] border-t-[6px] border-x-transparent border-t-[#7a7a7a]" />
        </div>
      </div>
      {/* main */}
      <div className="h-[776px] shrink-0 flex">
        <div className="w-[337px] flex">
          <Strip />
          <div className="w-[304px] flex flex-col">
            <div className="h-[25px] flex items-center px-[4px] pb-[2px] text-[#555] justify-between">
              <span>Scene</span>
              <div className="flex items-center mr-[2px] text-[#555]">
                <span className="inline-block w-0 h-0 border-x-[5px] border-t-[5px] border-x-transparent border-t-[#666]" />
                <svg width="10" height="12" viewBox="0 0 10 12" className="ml-[8px]"><path d="M3 1h4v5l2 1H1l2-1zM5 7v4" fill="none" stroke="#666" /></svg>
                <svg width="10" height="10" viewBox="0 0 10 10" className="ml-[10px]"><path d="M1 1l8 8M9 1L1 9" stroke="#555" strokeWidth="1.200" /></svg>
              </div>
            </div>
            <div className="h-[20px] bg-white flex items-center justify-between pl-[2px]">
              <span className="text-[#555] pb-[2px]">Search ...</span>
              <div className="flex items-center">
                <div className="w-[18px] h-[18px] bg-[#ece9d8] border border-[#bbb] flex items-center justify-center">
                  <svg width="14" height="14" viewBox="0 0 14 14"><path d="M1 1l12 12M13 1L1 13" stroke="#d8342a" strokeWidth="2" /></svg>
                </div>
                <div className="bg-[#f0ead0] ml-[1px]"><TreeIc s={17} /></div>
              </div>
            </div>
            <Tree />
            <div className="h-[22px] flex items-stretch text-[#444]">
              <div className="w-[58px] bg-[#f6f6f6] border border-t-0 border-[#a0a0a0] flex items-center pl-[4px] gap-[2px]">
                <div className="bg-[#eae4c8]"><TreeIc s={15} /></div><span>Scene</span>
              </div>
              <div className="flex items-center ml-[6px]">
                <I s={16}><rect x="5" y="2" width="22" height="28" fill="#1f3f5f" stroke="#111" /><rect x="9" y="5" width="14" height="10" fill="#6a9ad8" /><rect x="7" y="17" width="18" height="11" fill="#fff" /></I>
                <span className="ml-[3px] tracking-[-0.2px]">Properties</span>
              </div>
              <div className="flex items-center ml-[8px]">
                <I s={18}><circle cx="13" cy="13" r="10" fill="#b6c8ee" stroke="#555" strokeWidth="2" /><path d="M20 20l9 9" stroke="#c89020" strokeWidth="5" /></I>
                <span className="ml-[1px] tracking-[-0.2px]">Search</span>
              </div>
            </div>
          </div>
          <div className="w-[7px]" />
        </div>
        <div className="w-px bg-[#555]" />
        <Viewport />
      </div>
      {/* catalog */}
      <div className="h-[33px] shrink-0 flex flex-col pl-[7px]">
        <div className="h-[27px] flex items-center text-[#555] pt-[2px]">
          <svg width="14" height="14" viewBox="0 0 14 14" className="mr-[4px]"><rect x=".5" y=".5" width="12" height="13" fill="none" stroke="#555" /><rect x="3" y="3" width="2" height="2" fill="#555" /><rect x="8" y="3" width="2" height="2" fill="#555" /><rect x="3" y="9" width="2" height="2" fill="#555" /><rect x="8" y="9" width="2" height="2" fill="#555" /></svg>
          <span>Catalog Browser</span>
        </div>
        <div className="w-[104px] h-[6px] bg-[#d6d6d6]" />
      </div>
      {/* status */}
      <div className="h-[25px] shrink-0 bg-[#f1f1f1] border-t border-[#c8c8c8] border-b border-b-[#555] flex items-center">
        <div className="w-[1156px] pl-[3px]"><span className="text-[#1a6fd0] underline text-[12.3px]">http://www.ironcad.com</span></div>
        <div className="w-[138px] text-[#555] whitespace-pre">View size: 1582 x  776</div>
        <div className="w-[88px] text-[#555]">Units: in, deg</div>
        <Cell w="w-[24px]"><Zoomer /></Cell>
        <Cell w="w-[23px]"><Zoomer /></Cell>
        <Cell w="w-[12px]"><Arrow /></Cell>
        <Cell w="w-[20px]"><I s={16}><path d="M3 10h15v19H3z" fill="#f7d51d" stroke="#222" strokeWidth="1.600" /><path d="M3 10l6-6h15l-6 6z" fill="#f7f7f7" stroke="#222" /><path d="M18 10l6-6v19l-6 6z" fill="#e8e8e8" stroke="#222" /><path d="M24 12h8M28 8v8" stroke="#d01010" strokeWidth="2" /></I></Cell>
        <Cell w="w-[17px]"><Arrow /></Cell>
        <Cell w="w-[18px]"><I s={18}><path d="M5 10h16v20H5z" fill="#3c6ea8" stroke="#2a5690" /><path d="M5 10l6-7h16l-6 7z" fill="#bcd4ee" stroke="#3c6ea8" /><path d="M21 10l6-7v20l-6 7z" fill="#9cbce0" stroke="#3c6ea8" /></I></Cell>
        <Cell w="w-[18px]"><Arrow /></Cell>
        <Cell w="w-[20px]"><I s={18}><path d="M2 14l6-5v10zM30 14l-6-5v10z" fill="#1a6fd0" /><rect x="11" y="12" width="14" height="17" fill="#e8e8e8" stroke="#333" strokeWidth="1.600" /><path d="M16 3v7" stroke="#333" strokeWidth="2" /></I></Cell>
        <Cell w="w-[12px]"><Arrow /></Cell>
        <Cell w="w-[24px]" hi><I s={20}><path d="M3 14l14-10 12 0-8 24-15 2z" fill="#3c7dc0" stroke="#2a5690" /><path d="M17 4h12l-8 8H6z" fill="#a8c8e8" /></I></Cell>
        <Cell w="w-[20px]"><I s={18}><circle cx="9" cy="22" r="6" fill="#dce8f6" stroke="#335" strokeWidth="2" /><circle cx="23" cy="20" r="6" fill="#dce8f6" stroke="#335" strokeWidth="2" /><path d="M6 16l3-12M26 14L23 4" stroke="#335" strokeWidth="2" /></I></Cell>
        <Cell w="w-[8px]"><Arrow /></Cell>
        <div className="w-[5px]" />
        <Cell w="w-[28px]" hi><I s={18}><path d="M3 10h17v19H3z" fill="#a8c4e8" stroke="#2a5690" strokeWidth="1.500" /><path d="M3 10l7-7h17l-7 7z" fill="#dce8f6" stroke="#2a5690" /><path d="M20 10l7-7v19l-7 7z" fill="#c4d8ef" stroke="#2a5690" /></I><span className="ml-[2px] flex"><Arrow /></span></Cell>
        <div className="w-[6px]" />
        <Cell w="w-[20px]"><I s={18}><path d="M4 14h24v15H4z" fill="#1a6fd0" stroke="#123" strokeWidth="1.600" /><path d="M4 14l6-5h6l2-6h10v11" fill="#6ea6e6" stroke="#123" strokeWidth="1.600" /></I></Cell>
        <Cell w="w-[8px]"><Arrow /></Cell>
        <div className="w-[4px]" />
        <Cell w="w-[20px]"><GrayHandCur s={18} /></Cell>
        <div className="w-[2px]" />
        <Cell w="w-[24px]" hi><CursorIc s={18} /></Cell>
        <div className="w-[3px]" />
        <Cell w="w-[20px]"><CursorIc s={16} c="#f4f4f4" st="#aaa" /></Cell>
        <div className="w-[3px]" />
        <Drop w="w-[87px]" text="Drilldown: Int" />
        <div className="w-[2px]" />
        <Drop w="w-[65px]" text="Default" />
        <div className="ml-[2px]"><I s={18}><rect x="11" y="2" width="10" height="9" fill="#2a6ad0" /><path d="M16 11v5M6 16h20M6 16v4M26 16v4" stroke="#333" /><rect x="2" y="20" width="10" height="9" fill="#f7d51d" stroke="#333" /><rect x="20" y="20" width="10" height="9" fill="#2a6ad0" /></I></div>
      </div>
    </div>
  );
}
